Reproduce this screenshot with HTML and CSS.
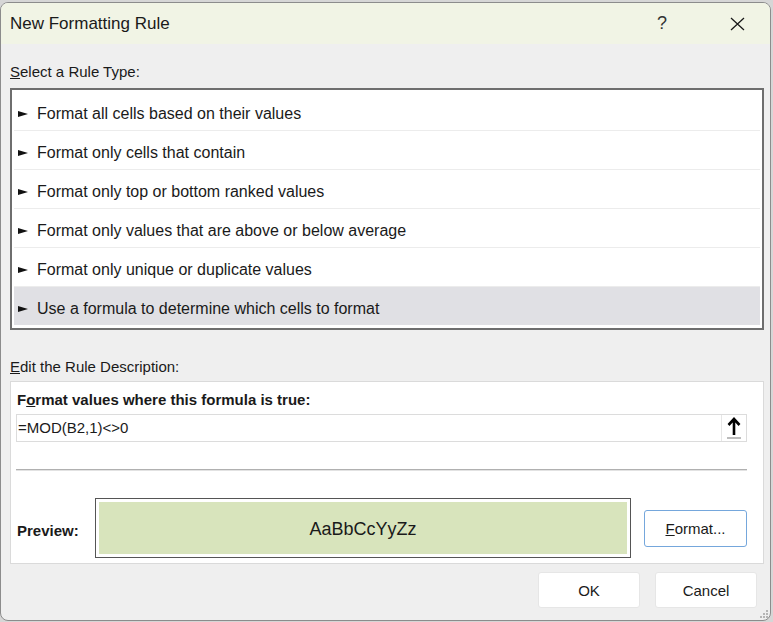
FILE: index.html
```html
<!DOCTYPE html>
<html lang="en">
  <head>
    <meta charset="UTF-8" />
    <title>New Formatting Rule</title>
    <link rel="stylesheet" href="styles.css">
  </head>
  <body>
    <div class="dialog">
      <div class="titlebar">
        <span class="title">New Formatting Rule</span>
        <span class="help">?</span>
        <span class="close">
          <svg width="15" height="14" viewBox="0 0 15 14">
            <path d="M1 1 L14 13 M14 1 L1 13" stroke="#1a1a1a" stroke-width="1.3" fill="none" />
          </svg>
        </span>
      </div>

      <div class="body">
        <div class="label label-first"><u>S</u>elect a Rule Type:</div>
        <div class="rule-list">
          <div class="rule"><span class="pointer"></span>Format all cells based on their values</div>
          <div class="rule"><span class="pointer"></span>Format only cells that contain</div>
          <div class="rule"><span class="pointer"></span>Format only top or bottom ranked values</div>
          <div class="rule"><span class="pointer"></span>Format only values that are above or below average</div>
          <div class="rule"><span class="pointer"></span>Format only unique or duplicate values</div>
          <div class="rule selected"><span class="pointer"></span>Use a formula to determine which cells to format</div>
        </div>

        <div class="label label-second"><u>E</u>dit the Rule Description:</div>
        <div class="desc">
          <div class="desc-title">F<u>o</u>rmat values where this formula is true:</div>
          <div class="formula">
            <span class="formula-text">=MOD(B2,1)&lt;&gt;0</span>
            <span class="collapse-btn">
              <svg width="14" height="22" viewBox="0 0 14 22">
                <path d="M7 2 L7 18 M1.5 8 L7 2 L12.5 8" stroke="#000" stroke-width="2.6" fill="none" />
                <rect x="0" y="20.5" width="14" height="1" fill="#7a7a7a" />
              </svg>
            </span>
          </div>
          <div class="divider"></div>
          <div class="preview-row">
            <span class="preview-label">Preview:</span>
            <div class="preview-box">
              <div class="preview-fill">AaBbCcYyZz</div>
            </div>
            <button class="btn btn-format"><u>F</u>ormat...</button>
          </div>
        </div>

        <div class="actions">
          <button class="btn">OK</button>
          <button class="btn">Cancel</button>
        </div>
      </div>

      <div class="grip">
        <svg width="10" height="10" viewBox="0 0 10 10">
          <rect x="7" y="1" width="2" height="2" fill="#b5b5b5" />
          <rect x="4" y="4" width="2" height="2" fill="#b5b5b5" />
          <rect x="7" y="4" width="2" height="2" fill="#b5b5b5" />
          <rect x="1" y="7" width="2" height="2" fill="#b5b5b5" />
          <rect x="4" y="7" width="2" height="2" fill="#b5b5b5" />
          <rect x="7" y="7" width="2" height="2" fill="#b5b5b5" />
        </svg>
      </div>
    </div>
  </body>
</html>
```

FILE: styles.css
```css
* {
  box-sizing: border-box;
}

body {
  margin: 0;
  background: #d6d6d6;
  font-family: "Liberation Sans", Arial, sans-serif;
  color: #1a1a1a;
}

.dialog {
  position: relative;
  width: 771px;
  height: 619px;
  margin-top: 2px;
  border: 1px solid #8c8c8c;
  border-radius: 8px;
  background: #efefef;
  overflow: hidden;
}

.titlebar {
  display: flex;
  align-items: center;
  height: 41px;
  padding: 0 0 0 9px;
  background: #f1f4e5;
}

.title {
  flex: 1;
  font-size: 17px;
}

.help {
  width: 16px;
  margin-right: 57px;
  font-size: 18px;
  color: #333;
}

.close {
  display: flex;
  width: 40px;
}

.body {
  padding: 0 7px 0 9px;
}

.label {
  font-size: 15px;
  line-height: 20px;
}

.label-first {
  margin-top: 18px;
}

.label-second {
  margin-top: 27px;
}

.rule-list {
  width: 754px;
  height: 242px;
  margin-top: 6px;
  padding: 2px;
  border: 2px solid #6e6e6e;
  background: #fff;
}

.rule {
  display: flex;
  align-items: center;
  height: 39px;
  padding-top: 6px;
  padding-left: 4px;
  font-size: 16px;
  border-bottom: 1px solid #ececec;
}

.rule.selected {
  height: 38px;
  border-bottom: none;
  background: #e0e0e4;
}

.pointer {
  width: 0;
  height: 0;
  margin-right: 9px;
  border-left: 10px solid #111;
  border-top: 3px solid transparent;
  border-bottom: 3px solid transparent;
}

.desc {
  width: 754px;
  height: 183px;
  margin-top: 4px;
  padding: 8px 16px 0 5px;
  border: 1px solid #dadada;
  background: #fff;
}

.desc-title {
  margin-left: 1px;
  font-size: 15px;
  font-weight: bold;
  line-height: 20px;
}

.formula {
  display: flex;
  align-items: stretch;
  height: 28px;
  margin-top: 4px;
  border: 1px solid #dcdcdc;
}

.formula-text {
  flex: 1;
  padding-left: 1px;
  font-size: 15px;
  line-height: 26px;
}

.collapse-btn {
  display: flex;
  align-items: center;
  justify-content: center;
  width: 25px;
  border-left: 1px solid #e6e6e6;
}

.divider {
  margin-top: 27px;
  border-top: 1px solid #b0b0b0;
  border-bottom: 1px solid #e2e2e2;
}

.preview-row {
  display: flex;
  align-items: center;
  margin-top: 27px;
}

.preview-label {
  width: 79px;
  padding-left: 1px;
  padding-top: 5px;
  font-size: 15px;
  font-weight: bold;
}

.preview-box {
  width: 536px;
  height: 60px;
  padding: 3px;
  border: 1px solid #555;
  background: #fff;
}

.preview-fill {
  display: flex;
  align-items: center;
  justify-content: center;
  height: 100%;
  padding-top: 2px;
  background: #d8e4bc;
  font-size: 18px;
}

.btn {
  width: 102px;
  height: 36px;
  padding: 0;
  border: 1px solid #e6e6e6;
  border-radius: 3px;
  background: #fff;
  font-family: "Liberation Sans", Arial, sans-serif;
  font-size: 15px;
  color: #1a1a1a;
}

.btn-format {
  width: 103px;
  height: 37px;
  margin-left: 13px;
  border-color: #75a7dc;
}

.actions {
  display: flex;
  justify-content: flex-end;
  gap: 15px;
  margin-top: 8px;
  padding-right: 6px;
}

.grip {
  position: absolute;
  right: 1px;
  bottom: 1px;
  line-height: 0;
}
```
